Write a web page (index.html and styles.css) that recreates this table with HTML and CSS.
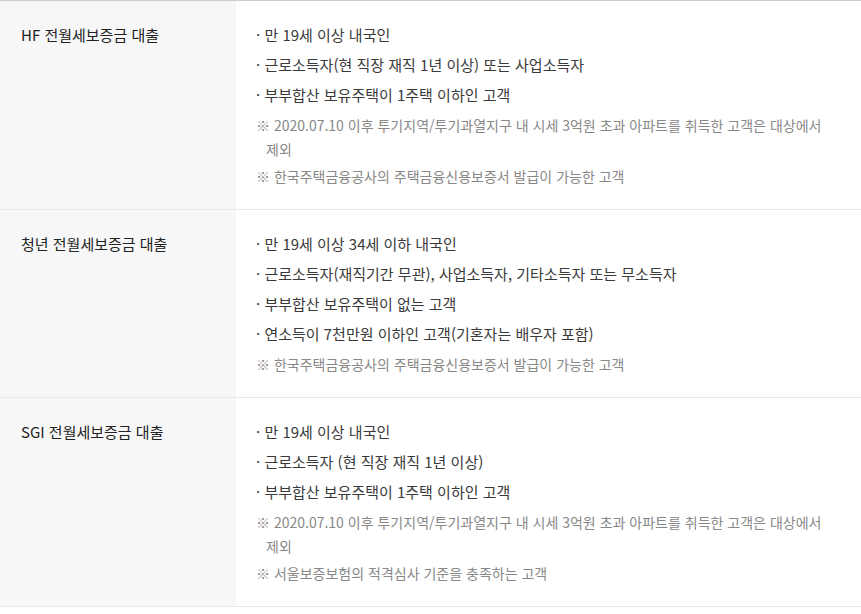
FILE: index.html
```html
<!DOCTYPE html>
<html lang="ko">
<head>
<meta charset="utf-8">
<title>전월세보증금 대출 자격</title>
<link rel="stylesheet" href="styles.css">
</head>
<body>
<div class="table">
  <div class="row">
    <div class="head">HF 전월세보증금 대출</div>
    <div class="body">
      <ul class="list">
        <li class="item">· 만 19세 이상 내국인</li>
        <li class="item">· 근로소득자(현 직장 재직 1년 이상) 또는 사업소득자</li>
        <li class="item">· 부부합산 보유주택이 1주택 이하인 고객</li>
        <li class="note">※ 2020.07.10 이후 투기지역/투기과열지구 내 시세 3억원 초과 아파트를 취득한 고객은 대상에서 제외</li>
        <li class="note">※ 한국주택금융공사의 주택금융신용보증서 발급이 가능한 고객</li>
      </ul>
    </div>
  </div>
  <div class="row">
    <div class="head">청년 전월세보증금 대출</div>
    <div class="body">
      <ul class="list">
        <li class="item">· 만 19세 이상 34세 이하 내국인</li>
        <li class="item">· 근로소득자(재직기간 무관), 사업소득자, 기타소득자 또는 무소득자</li>
        <li class="item">· 부부합산 보유주택이 없는 고객</li>
        <li class="item">· 연소득이 7천만원 이하인 고객(기혼자는 배우자 포함)</li>
        <li class="note">※ 한국주택금융공사의 주택금융신용보증서 발급이 가능한 고객</li>
      </ul>
    </div>
  </div>
  <div class="row">
    <div class="head">SGI 전월세보증금 대출</div>
    <div class="body">
      <ul class="list">
        <li class="item">· 만 19세 이상 내국인</li>
        <li class="item">· 근로소득자 (현 직장 재직 1년 이상)</li>
        <li class="item">· 부부합산 보유주택이 1주택 이하인 고객</li>
        <li class="note">※ 2020.07.10 이후 투기지역/투기과열지구 내 시세 3억원 초과 아파트를 취득한 고객은 대상에서 제외</li>
        <li class="note">※ 서울보증보험의 적격심사 기준을 충족하는 고객</li>
      </ul>
    </div>
  </div>
</div>
</body>
</html>
```

FILE: styles.css
```css
html, body {
  margin: 0;
  padding: 0;
  background: #ffffff;
}
body {
  font-family: "Noto Sans CJK KR", "Noto Sans", sans-serif;
  color: #333333;
  word-break: keep-all;
}
.table {
  border-top: 1px solid #cccccc;
}
.row {
  display: grid;
  grid-template-columns: 236px 1fr;
  border-bottom: 1px solid #e8e8e8;
}
.head {
  background: #f7f7f7;
  padding: 19px 10px 21px 21px;
  font-size: 15px;
  line-height: 30px;
  color: #222222;
}
.body {
  padding: 19px 21px 21px 20px;
}
.list {
  list-style: none;
  margin: 0;
  padding: 0;
}
.item {
  font-size: 15px;
  line-height: 30px;
  color: #3a3a3a;
}
.note {
  font-size: 14px;
  line-height: 24px;
  color: #888888;
  margin-top: 3px;
  padding-left: 10px;
  text-indent: -10px;
}
```
